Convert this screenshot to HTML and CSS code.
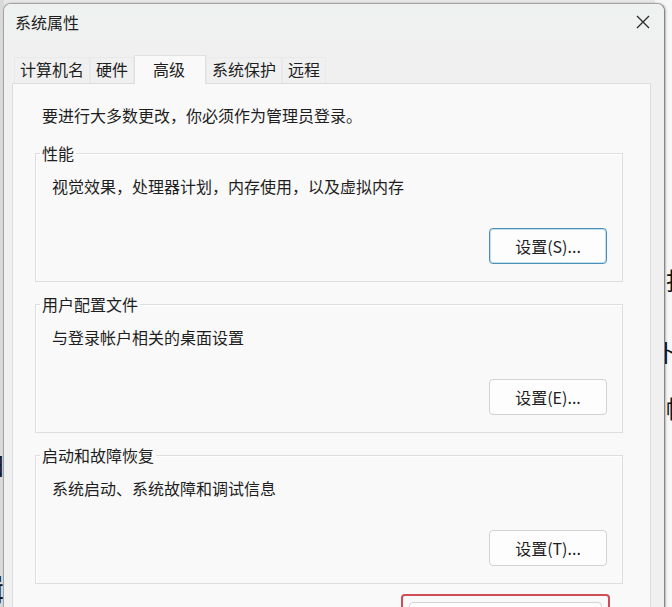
FILE: index.html
```html
<!DOCTYPE html>
<html lang="zh-CN">
<head>
<meta charset="utf-8">
<title>系统属性</title>
<link rel="stylesheet" href="styles.css">
</head>
<body>
<div class="desk">
  <div class="bgwin bgwin-left">
    <span class="frag lf1">阳</span>
    <span class="frag lf2">辑</span>
  </div>
  <div class="bgwin bgwin-right">
    <span class="frag rf1">找</span>
    <span class="frag rf2">卜</span>
    <span class="frag rf3">帐</span>
  </div>

  <div class="dialog">
    <div class="titlebar">
      <span class="title">系统属性</span>
      <button class="close" aria-label="关闭">
        <svg width="14" height="14" viewBox="0 0 14 14"><path d="M1 1 L13 13 M13 1 L1 13" stroke="#2b2b2b" stroke-width="1.3" fill="none"/></svg>
      </button>
    </div>

    <div class="tabs">
      <div class="tab">计算机名</div>
      <div class="tab">硬件</div>
      <div class="tab active">高级</div>
      <div class="tab">系统保护</div>
      <div class="tab">远程</div>
    </div>

    <div class="panel">
      <p class="intro">要进行大多数更改，你必须作为管理员登录。</p>

      <fieldset class="group">
        <legend>性能</legend>
        <div class="group-body">
          <p class="desc">视觉效果，处理器计划，内存使用，以及虚拟内存</p>
          <div class="actions"><button class="btn btn-focus">设置(S)...</button></div>
        </div>
      </fieldset>

      <fieldset class="group">
        <legend>用户配置文件</legend>
        <div class="group-body">
          <p class="desc">与登录帐户相关的桌面设置</p>
          <div class="actions"><button class="btn">设置(E)...</button></div>
        </div>
      </fieldset>

      <fieldset class="group">
        <legend>启动和故障恢复</legend>
        <div class="group-body">
          <p class="desc">系统启动、系统故障和调试信息</p>
          <div class="actions"><button class="btn">设置(T)...</button></div>
        </div>
      </fieldset>

      <div class="bottom-row">
        <div class="highlight"><button class="btn btn-wide">环境变量(N)...</button></div>
      </div>
    </div>
  </div>
</div>
</body>
</html>
```

FILE: styles.css
```css
html, body {
  margin: 0;
  padding: 0;
}

.desk {
  position: relative;
  width: 672px;
  height: 607px;
  overflow: hidden;
  background: #e6e6e6;
  font-family: "Noto Sans CJK SC", "Microsoft YaHei", sans-serif;
  color: #1e1e1e;
}

/* background windows peeking out at the edges */
.bgwin {
  position: absolute;
  top: 0;
  height: 607px;
  background: #f7f7f7;
  display: flex;
  flex-direction: column;
}

.bgwin-right {
  left: 655px;
  width: 60px;
  padding-left: 11px;
  box-sizing: border-box;
}

.bgwin-left {
  left: -40px;
  width: 44px;
  align-items: flex-end;
  background: #d9d9d9;
}

.frag {
  font-size: 24px;
  line-height: 26px;
  color: #111;
}

.rf1 { margin-top: 267px; }
.rf2 { margin-top: 46px; margin-left: -10px; }
.rf3 { margin-top: 30px; }

.lf1 { margin-top: 452px; }
.lf2 { margin-top: 92px; font-size: 30px; line-height: 34px; }

/* dialog window */
.dialog {
  position: absolute;
  left: 3px;
  top: 3px;
  width: 660px;
  height: 640px;
  border: 1px solid #a3a3a3;
  border-right-color: #858585;
  border-radius: 8px 8px 0 0;
  background: #f0f0f0;
  box-shadow: 1px 0 2px rgba(0, 0, 0, 0.25);
  overflow: hidden;
}

.titlebar {
  display: flex;
  align-items: center;
  height: 36px;
  background: linear-gradient(#edf2f0, #eff1f0);
}

.title {
  padding-left: 11px;
  font-size: 16px;
  line-height: 22px;
}

.close {
  margin-left: auto;
  width: 42px;
  height: 36px;
  padding: 0;
  border: 0;
  background: transparent;
  display: flex;
  align-items: center;
  justify-content: center;
}

.tabs {
  display: flex;
  align-items: flex-end;
  height: 43px;
  padding-left: 10px;
}

.tab {
  box-sizing: border-box;
  height: 26px;
  padding: 0 5px;
  line-height: 22px;
  font-size: 16px;
  border: 1px solid #e9e9e9;
  border-bottom: 0;
  background: #f0f0f0;
  white-space: nowrap;
}

.tab.active {
  position: relative;
  z-index: 1;
  height: 29px;
  margin-bottom: -1px;
  padding: 2px 20px 0 18px;
  background: #f9f9f9;
  border-color: #e0e0e0;
}

.panel {
  margin: 0 13px 0 8px;
  padding: 20px 27px 20px 22px;
  background: #f9f9f9;
  border: 1px solid #dcdcdc;
}

.intro {
  margin: 0 0 0 7px;
  font-size: 16px;
  line-height: 22px;
}

.group {
  margin: 16px 0 0;
  padding: 0 15px 17px 4px;
  border: 1px solid #dedede;
  box-shadow: inset 1px 1px 0 #ffffff;
  min-width: 0;
}

.group + .group {
  margin-top: 11px;
}

.group legend {
  padding: 0 2px;
  font-size: 16px;
  line-height: 22px;
}

.group-body {
  padding-left: 12px;
}

.desc {
  margin: 11px 0 0;
  font-size: 16px;
  line-height: 22px;
}

.actions {
  display: flex;
  justify-content: flex-end;
  margin-top: 31px;
}

.btn {
  width: 118px;
  height: 36px;
  padding: 0;
  font-family: "Noto Sans CJK SC", "Microsoft YaHei", sans-serif;
  font-size: 16px;
  color: #1e1e1e;
  background: #fdfdfd;
  border: 1px solid #d2d2d2;
  border-radius: 4px;
}

.btn-focus {
  border-color: #4a8fb6;
  box-shadow: inset 0 0 0 1px #c4dfed;
}

.bottom-row {
  display: flex;
  justify-content: flex-end;
  margin-top: 10px;
  padding-right: 13px;
}

.highlight {
  border: 2px solid #cf4d56;
  border-radius: 4px;
  padding: 6px;
}

.btn-wide {
  width: 193px;
}
```
